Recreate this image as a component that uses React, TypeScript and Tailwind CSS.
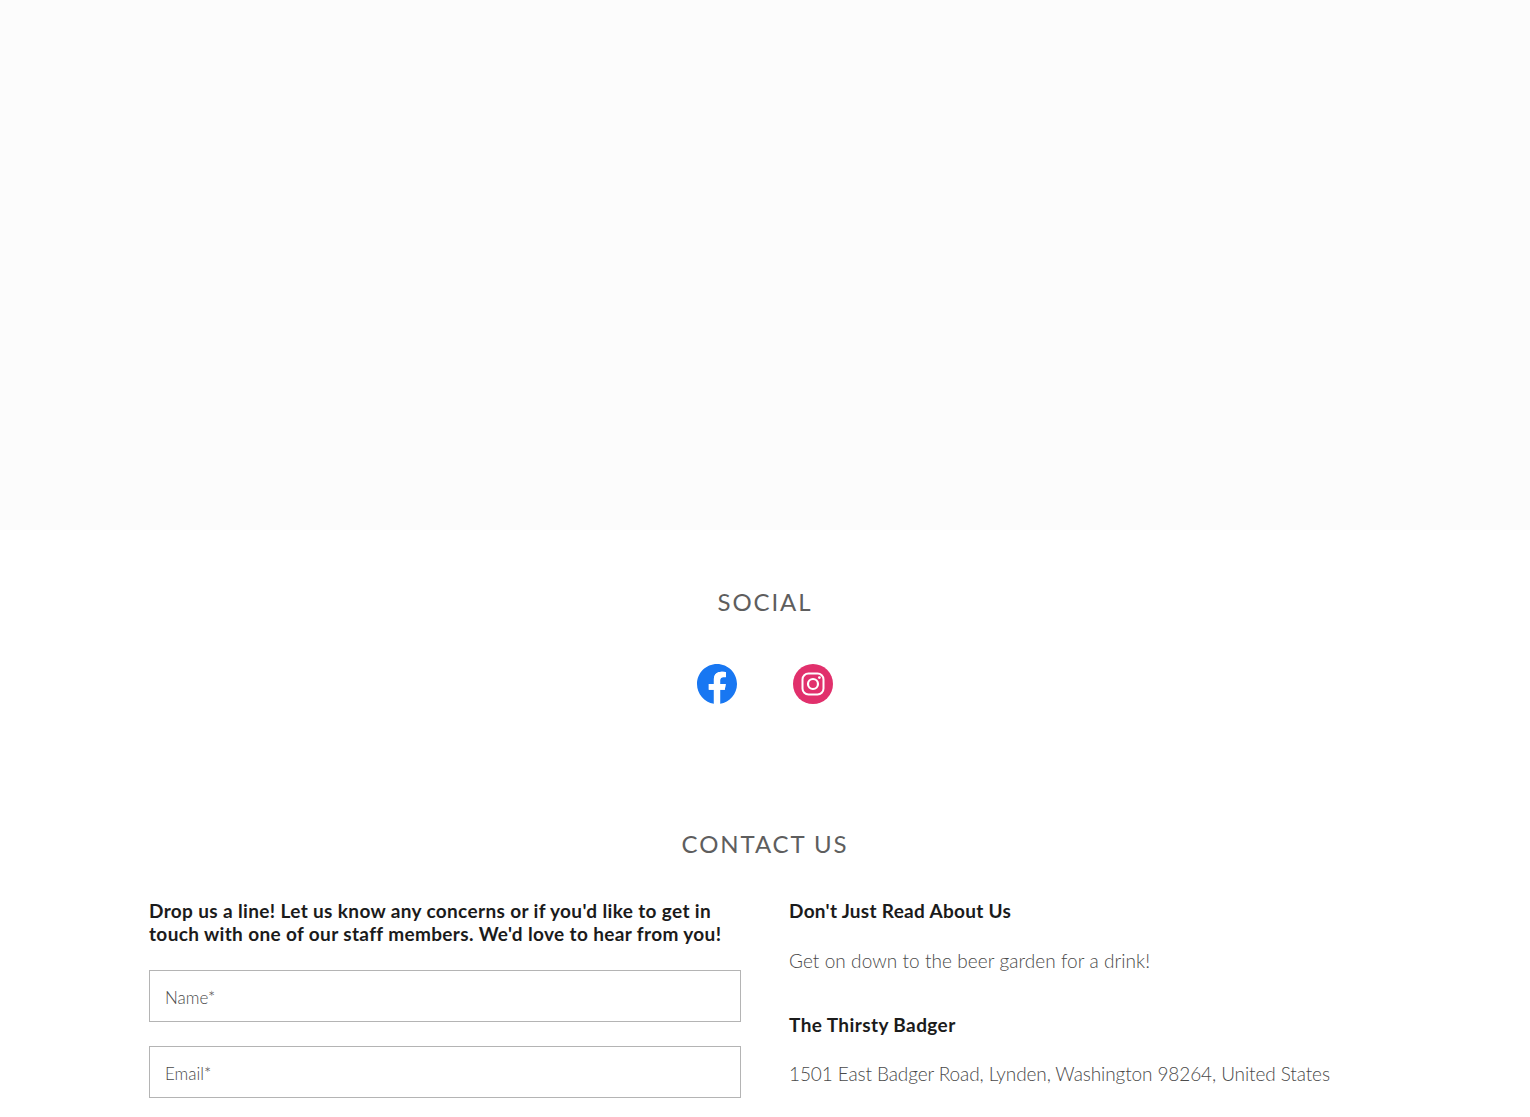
import React from "react";

const Facebook = () => (
  <svg width="40" height="40" viewBox="0 0 40 40" aria-label="Facebook">
    <path fill="#1877F2" d="M40 20C40 8.95 31.05 0 20 0S0 8.95 0 20c0 9.98 7.31 18.26 16.88 19.76V25.78h-5.08V20h5.08v-4.41c0-5.01 2.99-7.78 7.55-7.78 2.19 0 4.48.39 4.48.39v4.92h-2.52c-2.49 0-3.26 1.54-3.26 3.12V20h5.55l-.89 5.78h-4.66v13.98C32.69 38.26 40 29.98 40 20z" />
    <path fill="#fff" d="M27.78 25.78l.89-5.78h-5.55v-3.75c0-1.58.77-3.12 3.26-3.12h2.52V8.2s-2.29-.39-4.48-.39c-4.56 0-7.55 2.77-7.55 7.78V20h-5.08v5.78h5.08v13.98a20.1 20.1 0 006.25 0V25.78h4.66z" />
  </svg>
);

const Instagram = () => (
  <svg width="40" height="40" viewBox="0 0 40 40" aria-label="Instagram">
    <circle cx="20" cy="20" r="20" fill="#E1306C" />
    <rect x="9.5" y="9.5" width="21" height="21" rx="6" fill="none" stroke="#fff" strokeWidth="2" />
    <circle cx="20" cy="20" r="5" fill="none" stroke="#fff" strokeWidth="2.2" />
    <circle cx="26.4" cy="13.6" r="1.35" fill="#fff" />
  </svg>
);

const Field = ({ label }: { label: string }) => (
  <div className="h-[52px] border border-[#b4b4b4] bg-white pl-[15px] pt-[16px] text-[17px] leading-[22px] font-light text-[#4a4a4a]">
    {label}
  </div>
);

export default function App() {
  return (
    <div className="h-[1117px] overflow-hidden bg-white font-['Lato','Noto_Sans',sans-serif]">
      <div className="h-[530px] bg-[#fcfcfc]" />

      <section className="flex flex-col items-center pt-[56px]">
        <h2 className="text-[24px] leading-[32px] font-normal tracking-[1.9px] text-[#5e5e5e]">SOCIAL</h2>
        <div className="mt-[46px] flex gap-[56px]">
          <Facebook />
          <Instagram />
        </div>
      </section>

      <section className="mt-[124px] flex flex-col items-center">
        <h2 className="text-[24px] leading-[32px] font-normal tracking-[1.9px] text-[#5e5e5e]">CONTACT US</h2>
        <div className="mt-[39px] grid w-[1232px] grid-cols-2 gap-x-[48px]">
          <div>
            <p className="text-[19px] leading-[23px] font-bold tracking-[0.36px] text-[#1b1b1b]">
              Drop us a line! Let us know any concerns or if you'd like to get in touch with one of our staff members. We'd love to hear from you!
            </p>
            <div className="mt-[25px] flex flex-col gap-[24px]">
              <Field label="Name*" />
              <Field label="Email*" />
            </div>
          </div>
          <div>
            <h4 className="text-[19px] leading-[23px] font-bold tracking-[0.3px] text-[#1b1b1b]">Don't Just Read About Us</h4>
            <p className="mt-[25px] text-[19px] leading-[27px] font-light tracking-[0.07px] text-[#4a4a4a]">Get on down to the beer garden for a drink!</p>
            <h4 className="mt-[39px] text-[19px] leading-[23px] font-bold tracking-[0.4px] text-[#1b1b1b]">The Thirsty Badger</h4>
            <p className="mt-[24px] text-[19px] leading-[27px] font-light tracking-[-0.1px] text-[#4a4a4a]">1501 East Badger Road, Lynden, Washington 98264, United States</p>
          </div>
        </div>
      </section>
    </div>
  );
}
